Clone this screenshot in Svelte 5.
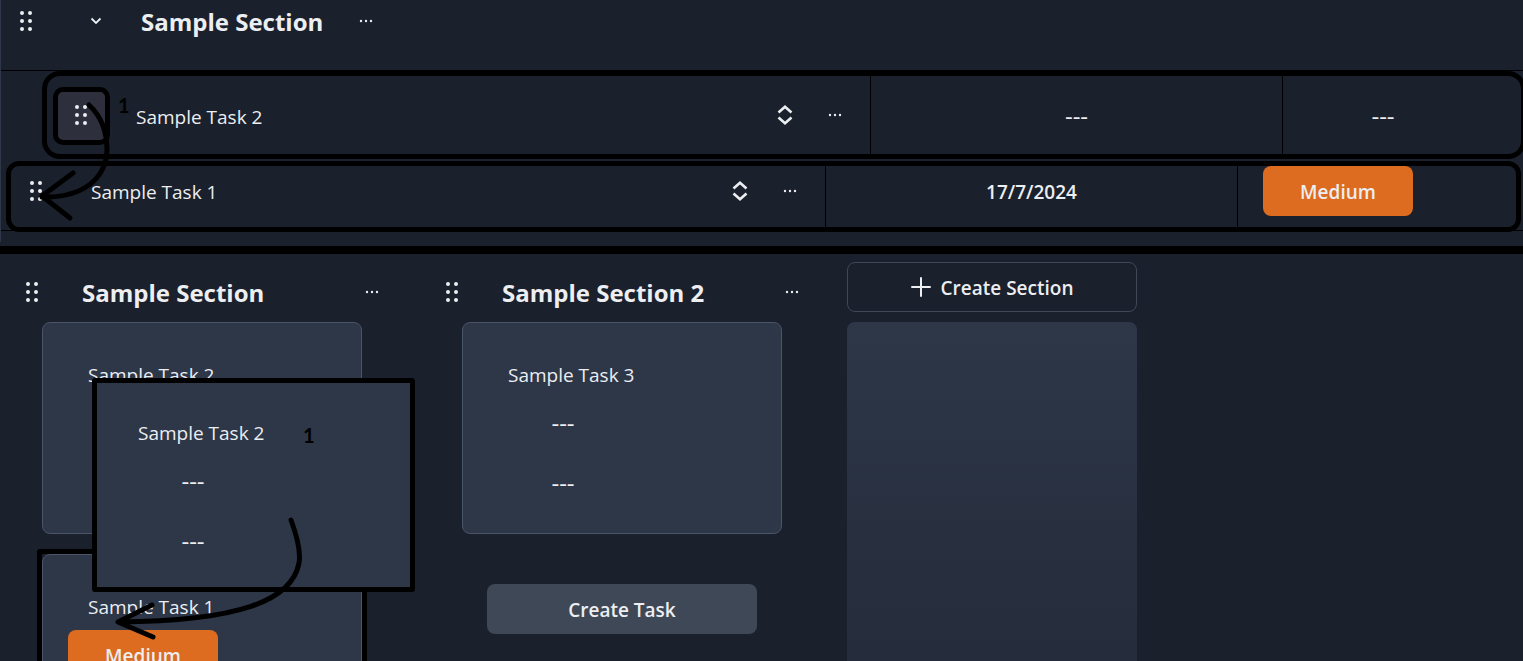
<script>
  const rows = [
    { name: 'Sample Task 2', date: '---', priority: '---', dragging: true },
    { name: 'Sample Task 1', date: '17/7/2024', priority: 'Medium', dragging: false },
  ];

  const sections = [
    {
      name: 'Sample Section',
      tasks: [
        { name: 'Sample Task 2', values: ['---', '---'] },
        { name: 'Sample Task 1', values: ['Medium'], target: true },
      ],
    },
    { name: 'Sample Section 2', tasks: [{ name: 'Sample Task 3', values: ['---', '---'] }] },
  ];

  const dragged = sections[0].tasks[0];
</script>

{#snippet grip()}
  <svg width="14" height="22" viewBox="0 0 14 22" fill="currentColor" aria-hidden="true">
    {#each [3, 11, 19] as cy}
      <circle cx="3" {cy} r="2" />
      <circle cx="11" {cy} r="2" />
    {/each}
  </svg>
{/snippet}

{#snippet dots()}
  <svg width="14" height="4" viewBox="0 0 14 4" fill="currentColor" aria-hidden="true">
    <circle cx="2" cy="2" r="1.2" />
    <circle cx="7" cy="2" r="1.2" />
    <circle cx="12" cy="2" r="1.2" />
  </svg>
{/snippet}

{#snippet value(text)}
  {#if text === 'Medium'}
    <button class="value medium">{text}</button>
  {:else}
    <span class="value empty">{text}</span>
  {/if}
{/snippet}

{#snippet card(task)}
  <p class="task-name">{task.name}</p>
  <div class="values">
    {#each task.values as text}
      {@render value(text)}
    {/each}
  </div>
{/snippet}

<main>
  <section class="list">
    <header class="list-head">
      <button class="icon" aria-label="Move section">{@render grip()}</button>
      <button class="icon toggle" aria-label="Collapse section">
        <svg width="12" height="8" viewBox="0 0 12 8" fill="none" stroke="currentColor" stroke-width="1.8" aria-hidden="true">
          <path d="M1.500 1.500 6 6l4.500-4.500" />
        </svg>
      </button>
      <h2>Sample Section</h2>
      <button class="icon" aria-label="Section menu">{@render dots()}</button>
    </header>

    <div class="rows">
      {#each rows as row}
        <div class="row" class:dragging={row.dragging}>
          <div class="name-cell">
            <button class="icon handle" aria-label="Move task">{@render grip()}</button>
            {#if row.dragging}<span class="mark row-mark">1</span>{/if}
            <span class="name">{row.name}</span>
            <button class="icon" aria-label="Open task">
              <svg width="16" height="20" viewBox="0 0 16 20" fill="none" stroke="currentColor" stroke-width="2.600" aria-hidden="true">
                <path d="M1.500 7.500 8 1.800l6.500 5.700M1.500 12.500 8 18.200l6.500-5.700" />
              </svg>
            </button>
            <button class="icon" aria-label="Task menu">{@render dots()}</button>
          </div>
          <div class="date-cell" class:empty={row.date === '---'}>{row.date}</div>
          <div class="priority-cell">{@render value(row.priority)}</div>
        </div>
      {/each}
    </div>

    <svg class="arrow list-arrow" width="80" height="124" viewBox="0 0 80 124" aria-hidden="true">
      <path d="M55 5C67 16 73 31 73 50C72 78 50 98 8 97M39 73 8 96l28 22" />
    </svg>
  </section>

  <section class="board">
    {#each sections as section}
      <div class="column">
        <header class="column-head">
          <button class="icon" aria-label="Move section">{@render grip()}</button>
          <h2>{section.name}</h2>
          <button class="icon" aria-label="Section menu">{@render dots()}</button>
        </header>
        <div class="cards">
          {#each section.tasks as task}
            <article class="card" class:target={task.target}>{@render card(task)}</article>
          {/each}
        </div>
        <button class="create-task">Create Task</button>
      </div>
    {/each}

    <div class="new-section">
      <button class="create-section">
        <svg width="20" height="20" viewBox="0 0 20 20" fill="none" stroke="currentColor" stroke-width="2" stroke-linecap="round" aria-hidden="true">
          <path d="M10 1v18M1 10h18" />
        </svg>
        <span>Create Section</span>
      </button>
      <div class="placeholder"></div>
    </div>

    <article class="card floating">
      {@render card(dragged)}
      <span class="mark card-mark">1</span>
    </article>
    <svg class="arrow board-arrow" width="200" height="130" viewBox="0 0 200 130" aria-hidden="true">
      <path d="M181 10C188 29 191 42 189 53C182 91 128 111 8 112M42 95 8 112l35 15" />
    </svg>
  </section>
</main>

<style>
  :global(body) {
    margin: 0;
    background: #1a202c;
  }

  main {
    height: 100vh;
    display: flex;
    flex-direction: column;
    overflow: hidden;
    background: #1a202c;
    color: #eceef1;
    font: 400 19px/28px 'Open Sans', 'Noto Sans', sans-serif;
  }

  button {
    padding: 0;
    border: 0;
    background: none;
    color: inherit;
    font: inherit;
    font-weight: 600;
    cursor: pointer;
  }

  h2 {
    margin: 0;
    font-size: 24px;
    line-height: 32px;
    font-weight: 700;
  }

  p {
    margin: 0;
  }

  .icon {
    width: 50px;
    height: 50px;
    flex: none;
    display: flex;
    align-items: center;
    justify-content: center;
  }

  .list {
    position: relative;
    flex: none;
    box-sizing: border-box;
    height: 254px;
    border-bottom: 8px solid #000;
  }

  .list::before {
    content: '';
    position: absolute;
    inset: 0 auto 4px 0;
    width: 1px;
    background: #2d3748;
  }

  .list-head {
    box-sizing: border-box;
    height: 71px;
    margin-left: 1px;
    display: flex;
    align-items: flex-start;
    border-bottom: 1px solid #000;
    overflow: hidden;
  }

  .list-head .icon {
    height: 42px;
  }

  .list-head .toggle {
    margin: 0 20px;
  }

  .list-head h2 {
    width: 200px;
    padding: 6px 0;
  }

  .rows {
    margin-left: 1px;
    display: flex;
    flex-direction: column;
    gap: 2px;
    overflow: hidden;
    background: linear-gradient(#000, #000) 0 159px / 100% 1px no-repeat;
  }

  .row {
    margin: 0 2px 0 5px;
    display: flex;
    border: 5px solid #000;
    border-radius: 13px;
    background: #1a202c;
  }

  .row.dragging {
    margin: 0 -3px 0 41px;
    border-radius: 18px;
  }

  .name-cell {
    position: relative;
    box-sizing: border-box;
    width: 815px;
    height: 61px;
    padding: 0 10px 11px 0;
    display: flex;
    align-items: center;
    border-right: 1px solid #000;
  }

  .name {
    flex: 1;
    padding: 2px 0 0 30px;
  }

  .date-cell {
    box-sizing: border-box;
    width: 412px;
    padding: 2px 0 11px;
    display: flex;
    align-items: center;
    justify-content: center;
    border-right: 1px solid #000;
    font-weight: 600;
  }

  .priority-cell {
    padding-left: 25px;
  }

  .dragging .name-cell {
    width: 824px;
    height: 78px;
    padding: 0 10px 0 6px;
  }

  .dragging .name {
    padding: 3px 0 0 26px;
  }

  .dragging .date-cell {
    padding-bottom: 0;
  }

  .dragging .priority-cell {
    padding-top: 2px;
    display: flex;
    align-items: center;
  }

  .dragging .handle {
    box-sizing: border-box;
    width: 57px;
    height: 58px;
    margin-top: 2px;
    padding: 0 2px 2px 0;
    border: 5px solid #000;
    border-radius: 10px;
    background: #2d303c;
  }

  .value {
    box-sizing: border-box;
    width: 150px;
    height: 50px;
    display: flex;
    align-items: center;
    justify-content: center;
  }

  .empty {
    font-size: 24px;
    font-weight: 400;
  }

  .medium {
    padding-top: 2px;
    border-radius: 8px;
    background: #dd6b20;
  }

  .mark {
    position: absolute;
    color: #000;
    font: 700 20px/24px Lato, sans-serif;
  }

  .row-mark {
    left: 71px;
    top: 17px;
  }

  .board {
    position: relative;
    flex: 1;
    min-height: 0;
    display: flex;
  }

  .column {
    flex: none;
    width: 420px;
    padding-top: 13px;
  }

  .column-head {
    padding: 0 23px 5px 7px;
    display: flex;
    align-items: center;
  }

  .column-head h2 {
    flex: 1;
    padding: 2px 0 0 25px;
  }

  .cards {
    padding: 0 58px 0 42px;
    display: flex;
    flex-direction: column;
    gap: 20px;
  }

  .card {
    position: relative;
    box-sizing: border-box;
    padding: 27px 25px 25px;
    border: 1px solid #4a5568;
    border-radius: 8px;
    background: #2d3748;
  }

  .target::before {
    content: '';
    position: absolute;
    inset: -6px;
    border: 5px solid #000;
    border-radius: 3px;
  }

  .task-name {
    padding: 11px 20px 9px;
  }

  .values {
    display: flex;
    flex-direction: column;
    gap: 10px;
  }

  .create-task {
    width: 270px;
    height: 50px;
    margin: 50px 0 50px 67px;
    padding-top: 2px;
    border-radius: 8px;
    background: #3f4856;
  }

  .new-section {
    flex: none;
    width: 290px;
    margin-left: 7px;
    padding-top: 8px;
    display: flex;
    flex-direction: column;
    gap: 10px;
  }

  .create-section {
    height: 50px;
    display: flex;
    align-items: center;
    justify-content: center;
    gap: 10px;
    flex: none;
    border: 1px solid #3f4856;
    border-radius: 8px;
  }

  .create-section span {
    padding-top: 2px;
  }

  .placeholder {
    flex: 1;
    border-radius: 8px 8px 0 0;
    background: linear-gradient(#2d3748, #252c3b);
  }

  .floating {
    position: absolute;
    left: 92px;
    top: 124px;
    width: 323px;
    height: 214px;
    padding: 25px 21px;
    border: 5px solid #000;
    border-radius: 3px;
  }

  .card-mark {
    left: 206px;
    top: 40px;
  }

  .arrow {
    position: absolute;
    fill: none;
    stroke: #000;
    stroke-width: 5;
    stroke-linecap: round;
    stroke-linejoin: round;
  }

  .list-arrow {
    left: 34px;
    top: 100px;
  }

  .board-arrow {
    left: 110px;
    top: 256px;
  }
</style>
